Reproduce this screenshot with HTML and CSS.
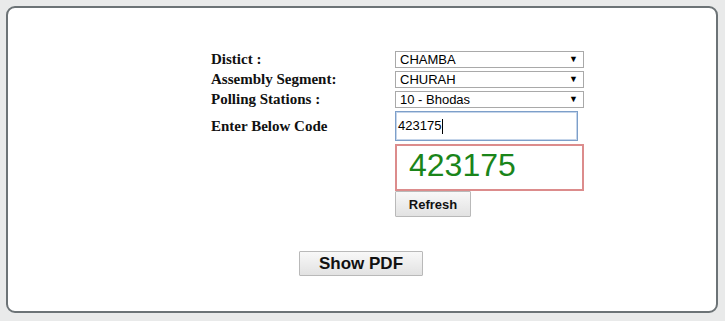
FILE: index.html
```html
<!DOCTYPE html>
<html>
<head>
<meta charset="utf-8">
<link rel="stylesheet" href="styles.css">
</head>
<body>
<div class="panel">
  <div class="form">
    <div class="label">Distict :</div>
    <div class="sel"><span class="val">CHAMBA</span><span class="arrow">▼</span></div>
    <div class="label">Assembly Segment:</div>
    <div class="sel"><span class="val">CHURAH</span><span class="arrow">▼</span></div>
    <div class="label">Polling Stations :</div>
    <div class="sel"><span class="val">10 - Bhodas</span><span class="arrow">▼</span></div>
    <div class="label code-label">Enter Below Code</div>
    <div class="input"><span>423175</span><span class="caret"></span></div>
    <div></div>
    <div class="captcha">423175</div>
    <div></div>
    <div><button class="btn refresh">Refresh</button></div>
  </div>
  <div class="actions">
    <button class="btn show">Show PDF</button>
  </div>
</div>
</body>
</html>
```
FILE: styles.css
```css
html, body {
  margin: 0;
  padding: 0;
  background: #e9eaea;
}
body {
  padding: 6px 7px 8px 6px;
  font-family: "Liberation Sans", Arial, sans-serif;
}
.panel {
  box-sizing: border-box;
  height: 307px;
  background: #fff;
  border: 2px solid #6c7376;
  border-radius: 9px;
  padding-top: 43px;
}
.form {
  margin-left: 203px;
  display: grid;
  grid-template-columns: 184px 189px;
  grid-auto-rows: auto;
  row-gap: 3px;
  align-items: center;
}
.label {
  font-family: "Liberation Serif", "Times New Roman", serif;
  font-weight: bold;
  font-size: 15px;
  color: #111;
  line-height: 17px;
}
.sel {
  position: relative;
  box-sizing: border-box;
  height: 17px;
  border: 1px solid #a9a9a9;
  background: #fff;
  font-size: 13px;
  line-height: 15px;
  padding-left: 4px;
  color: #000;
}
.arrow {
  position: absolute;
  right: 5px;
  top: 0;
  font-size: 9px;
  line-height: 15px;
  color: #000;
}
.input {
  box-sizing: border-box;
  width: 183px;
  height: 30px;
  border: 1px solid #7d9fc9;
  box-shadow: inset 0 0 0 1px #c5d5ea;
  font-size: 13px;
  line-height: 28px;
  padding-left: 2px;
  color: #000;
  display: flex;
  align-items: center;
}
.caret {
  display: inline-block;
  width: 1px;
  height: 15px;
  background: #000;
  margin-left: 1px;
}
.captcha {
  box-sizing: border-box;
  width: 189px;
  height: 47px;
  border: 2px solid #dc8c8c;
  color: #1a851a;
  font-size: 32px;
  line-height: 39px;
  padding-left: 12px;
}
.btn {
  font-family: "Liberation Sans", Arial, sans-serif;
  font-weight: bold;
  color: #111;
  background: linear-gradient(#f8f8f8, #e2e2e2);
  border: 1px solid #b9b9b9;
  border-radius: 1px;
  padding: 0;
  margin: 0;
}
.refresh {
  width: 76px;
  height: 26px;
  font-size: 13px;
  margin-top: -3px;
}
.actions {
  display: flex;
  justify-content: center;
  margin-top: 34px;
  padding-right: 2px;
}
.show {
  width: 124px;
  height: 25px;
  font-size: 17px;
}
```
